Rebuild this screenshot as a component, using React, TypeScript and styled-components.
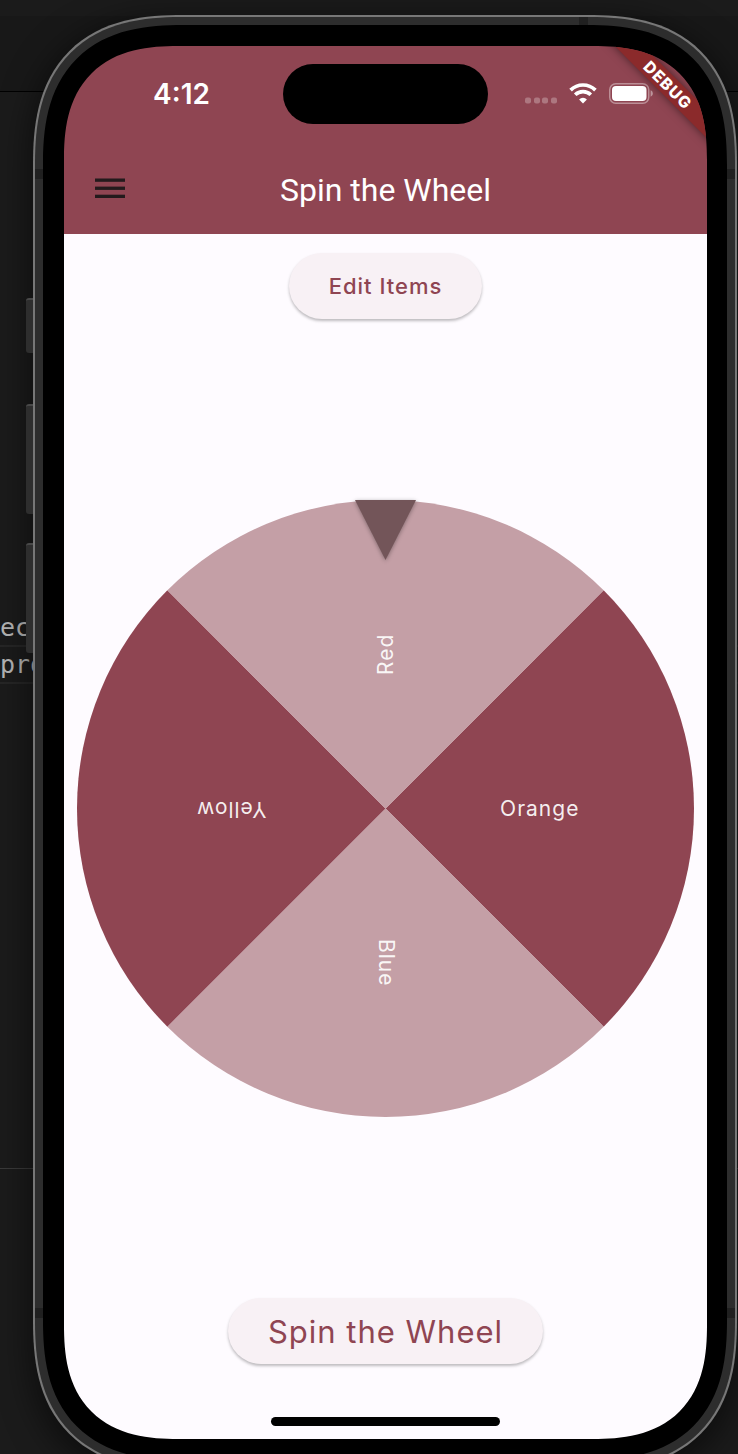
import React from "react";
import styled, { createGlobalStyle } from "styled-components";

const color = {
  primary: "#8f4552",
  primarySoft: "#c49fa6",
  pointer: "#735559",
  surface: "#fefbff",
  raised: "#f8f1f5",
  ink: "#231a1c",
};

const GlobalStyle = createGlobalStyle`
  *, *::before, *::after { box-sizing: border-box; }
  body {
    margin: 0;
    background: #191919;
    font-family: Inter, "Liberation Sans", sans-serif;
  }
`;

const Desktop = styled.div`
  position: relative;
  display: flex;
  flex-direction: column;
  min-height: 100vh;
  padding: 15px 1px 0 33px;
  overflow: hidden;
  background: #1b1b1b;
`;

/* Editor window that lies behind the simulator */
const Backdrop = styled.div`
  position: absolute;
  inset: 0;
  display: flex;
  flex-direction: column;
`;

const TitleStrip = styled.div`
  height: 16px;
  background: #1b1b1b;
`;

const TabStrip = styled.div`
  height: 76px;
  background: #181818;
  border-bottom: 1px solid #000;
`;

const EditorPane = styled.div`
  height: 1077px;
  padding-top: 518px;
  border-bottom: 1px solid #3a3a3a;
`;

const CodeLine = styled.div`
  height: 37px;
  line-height: 35px;
  font-family: "DejaVu Sans Mono", monospace;
  font-size: 25px;
  color: #b4b4b4;
  border-bottom: 2px solid #262626;
`;

const Phone = styled.div`
  position: relative;
  margin-bottom: -16px;
  padding: 8px;
  border: 2px solid #777;
  border-radius: 123px;
  background: #2d2d2d;
  box-shadow: 0 8px 32px 4px rgba(0, 0, 0, 0.5);

  @supports (corner-shape: superellipse(1.33)) {
    border-radius: 150px;
    corner-shape: superellipse(1.33);
  }
`;

const SideButtons = styled.div`
  position: absolute;
  top: 281px;
  left: -9px;
  display: flex;
  flex-direction: column;
`;

const SideButton = styled.div<{ $long?: boolean; $gap: number }>`
  width: 7px;
  height: ${(p) => (p.$long ? 110 : 55)}px;
  margin-bottom: ${(p) => p.$gap}px;
  border-top: 2px solid #484848;
  border-radius: 3px 0 0 3px;
  background: #2e2e2e;
`;

const AntennaBand = styled.div<{ $edge: "top" | "left" | "right"; $low?: boolean }>`
  position: absolute;
  background: #202020;
  ${(p) =>
    p.$edge === "top"
      ? "top: 0; right: 147px; width: 9px; height: 8px;"
      : `${p.$edge}: 0; width: 8px; height: 10px; ${p.$low ? "bottom: 150px;" : "top: 152px;"}`}
`;

const Bezel = styled.div`
  position: relative;
  padding: 21px 20px 21px 21px;
  border-radius: 113px;
  background: #000;

  @supports (corner-shape: superellipse(1.33)) {
    border-radius: 140px;
    corner-shape: superellipse(1.33);
  }
`;

const Screen = styled.main`
  position: relative;
  display: flex;
  flex-direction: column;
  min-height: calc(100vh - 61px);
  overflow: hidden;
  border-radius: 92px;

  @supports (corner-shape: superellipse(1.33)) {
    border-radius: 114px;
    corner-shape: superellipse(1.33);
  }
`;

const Header = styled.header`
  background: ${color.primary};
  color: #fff;
`;

const StatusBar = styled.div`
  display: grid;
  grid-template-columns: 1fr 205px 1fr;
  align-items: center;
  height: 96px;
`;

const Clock = styled.time`
  padding-left: 16px;
  text-align: center;
  font-size: 28px;
  line-height: 32px;
  font-weight: 600;
`;

const Island = styled.div`
  height: 60px;
  border-radius: 30px;
  background: #000;
`;

const StatusIcons = styled.div`
  display: flex;
  align-items: flex-end;
  gap: 12px;
  padding: 0 0 2px 37px;

  svg { display: block; flex: none; }
`;

const AppBar = styled.div`
  display: grid;
  grid-template-columns: 92px 1fr 92px;
  align-items: center;
  height: 92px;
`;

const MenuButton = styled.button`
  display: grid;
  place-items: center;
  height: 92px;
  padding: 0;
  border: 0;
  background: none;
  color: ${color.ink};
  cursor: pointer;
`;

const Title = styled.h1`
  margin: 0;
  padding-top: 4px;
  text-align: center;
  font-family: Roboto, "Liberation Sans", sans-serif;
  font-size: 32px;
  line-height: 40px;
  font-weight: 400;
`;

const Body = styled.section`
  flex: 1;
  display: flex;
  flex-direction: column;
  align-items: center;
  justify-content: space-between;
  padding: 19px 13px 13px;
  background: ${color.surface};
`;

const PillButton = styled.button<{ $large?: boolean }>`
  height: 66px;
  padding: 0 40px;
  border: 0;
  border-radius: 33px;
  background: ${color.raised};
  box-shadow: 0 2px 3px rgba(0, 0, 0, 0.26);
  color: ${color.primary};
  font-family: inherit;
  font-size: ${(p) => (p.$large ? 31 : 22)}px;
  font-weight: ${(p) => (p.$large ? 400 : 500)};
  letter-spacing: 1px;
  white-space: nowrap;
  cursor: pointer;
`;

const WheelDrawing = styled.svg`
  display: block;
  width: 100%;
  overflow: visible;

  text {
    fill: #fff;
    fill-opacity: 0.92;
    font-size: 21px;
    letter-spacing: 1px;
    text-anchor: middle;
  }
`;

const Pointer = styled.polygon`
  fill: ${color.pointer};
  filter: drop-shadow(0 1px 2px rgba(0, 0, 0, 0.35));
`;

const Footer = styled.footer`
  display: flex;
  flex-direction: column;
  align-items: center;
  gap: 53px;
`;

const HomeIndicator = styled.div`
  width: 229px;
  height: 9px;
  border-radius: 5px;
  background: #000;
`;

const DebugBanner = styled.div`
  position: absolute;
  top: 29px;
  right: -36px;
  width: 150px;
  height: 20px;
  transform: rotate(45deg);
  background: #8b2a2b;
  box-shadow: 0 0 10px rgba(0, 0, 0, 0.5);
  color: #fff;
  text-align: center;
  font-size: 16px;
  line-height: 20px;
  font-weight: 800;
  letter-spacing: 1px;
`;

const SignalIcon = () => (
  <svg width="32" height="7" viewBox="0 0 32 7" fill="#fff" fillOpacity="0.27" aria-hidden="true">
    {[0, 9, 17, 26].map((x) => (
      <rect key={x} x={x} y="0.5" width="6" height="6" rx="2" />
    ))}
  </svg>
);

const WifiIcon = () => (
  <svg width="28" height="21" viewBox="0 0 28 21" fill="none" stroke="#fff" aria-hidden="true">
    <path d="M1.6 7.1a17.6 17.6 0 0 1 24.8 0" strokeWidth="3.7" />
    <path d="M6.2 11.8a11.1 11.1 0 0 1 15.6 0" strokeWidth="3.6" />
    <path d="M14 20.4l-3.9-4a5.6 5.6 0 0 1 7.8 0z" fill="#fff" stroke="none" />
  </svg>
);

const BatteryIcon = () => (
  <svg width="45" height="21" viewBox="0 0 45 21" aria-hidden="true">
    <rect x="0.75" y="0.75" width="39" height="19.5" rx="6" fill="none" stroke="#fff" strokeOpacity="0.4" strokeWidth="1.5" />
    <rect x="3" y="3" width="34.5" height="15" rx="4" fill="#fff" />
    <path d="M41.6 7.3c3 1.2 3 5.2 0 6.4z" fill="#fff" fillOpacity="0.45" />
  </svg>
);

const MenuIcon = () => (
  <svg width="30" height="21" viewBox="0 0 30 21" fill="currentColor" aria-hidden="true">
    <rect y="0.5" width="30" height="3.3" />
    <rect y="8.6" width="30" height="3.3" />
    <rect y="16.7" width="30" height="3.3" />
  </svg>
);

const SIZE = 617;
const MID = SIZE / 2;

const items = ["Orange", "Blue", "Yellow", "Red"];

function sectorPath(index: number, count: number) {
  const step = (2 * Math.PI) / count;
  const start = (index - 0.5) * step;
  const end = start + step;
  const at = (a: number) => `${MID + MID * Math.cos(a)} ${MID + MID * Math.sin(a)}`;
  return `M${MID} ${MID}L${at(start)}A${MID} ${MID} 0 0 1 ${at(end)}Z`;
}

const Wheel = () => (
  <WheelDrawing viewBox={`0 0 ${SIZE} ${SIZE}`} role="img" aria-label="Wheel">
    {items.map((item, i) => (
      <path
        key={item}
        d={sectorPath(i, items.length)}
        fill={i % 2 === 0 ? color.primary : color.primarySoft}
      />
    ))}
    {items.map((item, i) => (
      <text
        key={item}
        x={MID + MID / 2}
        y={MID + 7}
        transform={`rotate(${(i * 360) / items.length} ${MID} ${MID})`}
      >
        {item}
      </text>
    ))}
    <Pointer points={`${MID - 30.5},0 ${MID + 30.5},0 ${MID},60`} />
  </WheelDrawing>
);

export default function App() {
  return (
    <>
      <GlobalStyle />
      <Desktop>
        <Backdrop>
          <TitleStrip />
          <TabStrip />
          <EditorPane>
            <CodeLine>ec</CodeLine>
            <CodeLine>pro</CodeLine>
          </EditorPane>
        </Backdrop>
        <Phone>
          <SideButtons>
            <SideButton $gap={51} />
            <SideButton $long $gap={29} />
            <SideButton $long $gap={0} />
          </SideButtons>
          <AntennaBand $edge="top" />
          <AntennaBand $edge="left" />
          <AntennaBand $edge="right" />
          <AntennaBand $edge="left" $low />
          <AntennaBand $edge="right" $low />
          <Bezel>
            <Screen>
              <Header>
                <StatusBar>
                  <Clock>4:12</Clock>
                  <Island />
                  <StatusIcons>
                    <SignalIcon />
                    <WifiIcon />
                    <BatteryIcon />
                  </StatusIcons>
                </StatusBar>
                <AppBar>
                  <MenuButton type="button" aria-label="Open menu">
                    <MenuIcon />
                  </MenuButton>
                  <Title>Spin the Wheel</Title>
                </AppBar>
              </Header>
              <Body>
                <PillButton type="button">Edit Items</PillButton>
                <Wheel />
                <Footer>
                  <PillButton type="button" $large>
                    Spin the Wheel
                  </PillButton>
                  <HomeIndicator />
                </Footer>
              </Body>
              <DebugBanner>DEBUG</DebugBanner>
            </Screen>
          </Bezel>
        </Phone>
      </Desktop>
    </>
  );
}
